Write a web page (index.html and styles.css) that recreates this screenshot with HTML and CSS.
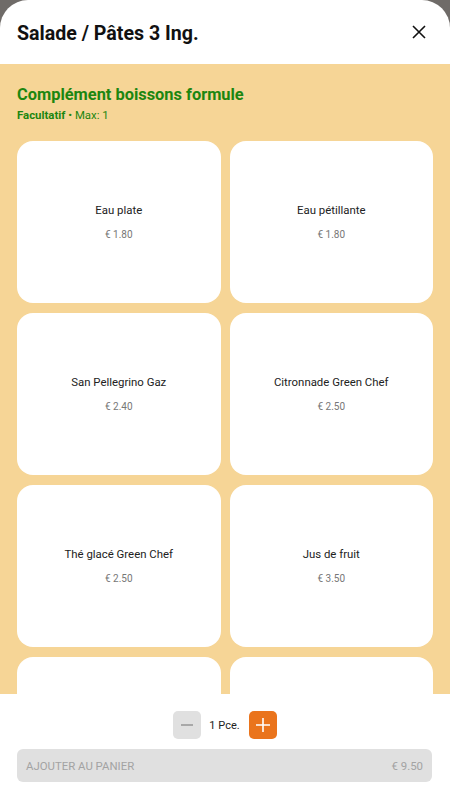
FILE: index.html
```html
<!DOCTYPE html>
<html lang="fr">
<head>
<meta charset="utf-8">
<link rel="stylesheet" href="styles.css">
</head>
<body>
<div class="sheet">
  <header class="header">
    <h1 class="title">Salade / Pâtes 3 Ing.</h1>
    <button class="close" aria-label="Fermer">
      <svg width="14" height="14" viewBox="0 0 14 14"><path d="M1 1L13 13M13 1L1 13" stroke="#111" stroke-width="1.6" fill="none"/></svg>
    </button>
  </header>
  <main class="content">
    <h2 class="section-title">Complément boissons formule</h2>
    <p class="section-sub"><strong>Facultatif</strong> • Max: 1</p>
    <div class="grid">
      <div class="card"><span class="name">Eau plate</span><span class="price">€ 1.80</span></div>
      <div class="card"><span class="name">Eau pétillante</span><span class="price">€ 1.80</span></div>
      <div class="card"><span class="name">San Pellegrino Gaz</span><span class="price">€ 2.40</span></div>
      <div class="card"><span class="name">Citronnade Green Chef</span><span class="price">€ 2.50</span></div>
      <div class="card"><span class="name">Thé glacé Green Chef</span><span class="price">€ 2.50</span></div>
      <div class="card"><span class="name">Jus de fruit</span><span class="price">€ 3.50</span></div>
      <div class="card"></div>
      <div class="card"></div>
    </div>
  </main>
  <footer class="footer">
    <div class="stepper">
      <button class="step minus"><svg width="12" height="12" viewBox="0 0 12 12"><path d="M0 6H12" stroke="#9a9a9a" stroke-width="1.6"/></svg></button>
      <span class="qty">1 Pce.</span>
      <button class="step plus"><svg width="14" height="14" viewBox="0 0 14 14"><path d="M0 7H14M7 0V14" stroke="#fff" stroke-width="1.6"/></svg></button>
    </div>
    <button class="add"><span>AJOUTER AU PANIER</span><span>€ 9.50</span></button>
  </footer>
</div>
</body>
</html>
```
FILE: styles.css
```css
* { box-sizing: border-box; }
html, body { margin: 0; padding: 0; }
body {
  background: #6f6b68;
  font-family: Roboto, "Noto Sans", sans-serif;
  width: 450px;
  height: 800px;
  overflow: hidden;
}
.sheet {
  height: 800px;
  background: #fff;
  border-radius: 28px 28px 0 0;
  display: flex;
  flex-direction: column;
  overflow: hidden;
}
.header {
  height: 64px;
  flex: none;
  display: flex;
  align-items: center;
  justify-content: space-between;
  padding: 0 24px 0 17px;
}
.title {
  margin: 0;
  font-size: 19.6px;
  font-weight: 700;
  color: #111;
  padding-top: 2px;
}
.close {
  border: 0;
  background: none;
  padding: 0;
  width: 14px;
  height: 14px;
  display: flex;
}
.content {
  flex: 1;
  background: #f6d596;
  padding: 21px 17px 0;
  overflow: hidden;
}
.section-title {
  margin: 0;
  font-size: 16.4px;
  font-weight: 700;
  color: #1c8610;
  line-height: 20px;
}
.section-sub {
  margin: 3px 0 0;
  font-size: 11.4px;
  color: #1c8610;
  line-height: 14px;
}
.section-sub strong { font-weight: 700; }
.grid {
  margin-top: 19px;
  display: grid;
  grid-template-columns: 1fr 1fr;
  gap: 10px 9px;
}
.card {
  height: 162px;
  background: #fff;
  border-radius: 16px;
  display: flex;
  flex-direction: column;
  align-items: center;
  justify-content: center;
  gap: 12px;
  padding-bottom: 2px;
}
.name {
  font-size: 11.4px;
  color: #222;
}
.price {
  font-size: 10px;
  color: #777;
}
.footer {
  height: 106px;
  flex: none;
  background: #fff;
  padding: 17px 18px 0 17px;
  display: flex;
  flex-direction: column;
  gap: 10px;
}
.stepper {
  display: flex;
  align-items: center;
  justify-content: center;
}
.step {
  width: 28px;
  height: 28px;
  border: 0;
  border-radius: 5px;
  display: flex;
  align-items: center;
  justify-content: center;
  padding: 0;
}
.minus { background: #e0e0e0; }
.plus { background: #ea741c; }
.qty {
  font-size: 11px;
  color: #222;
  width: 48px;
  text-align: center;
}
.add {
  height: 33px;
  border: 0;
  border-radius: 6px;
  background: #e0e0e0;
  color: #a3a3a3;
  font-family: inherit;
  font-size: 11.4px;
  display: flex;
  align-items: center;
  justify-content: space-between;
  padding: 0 9px;
}
```
